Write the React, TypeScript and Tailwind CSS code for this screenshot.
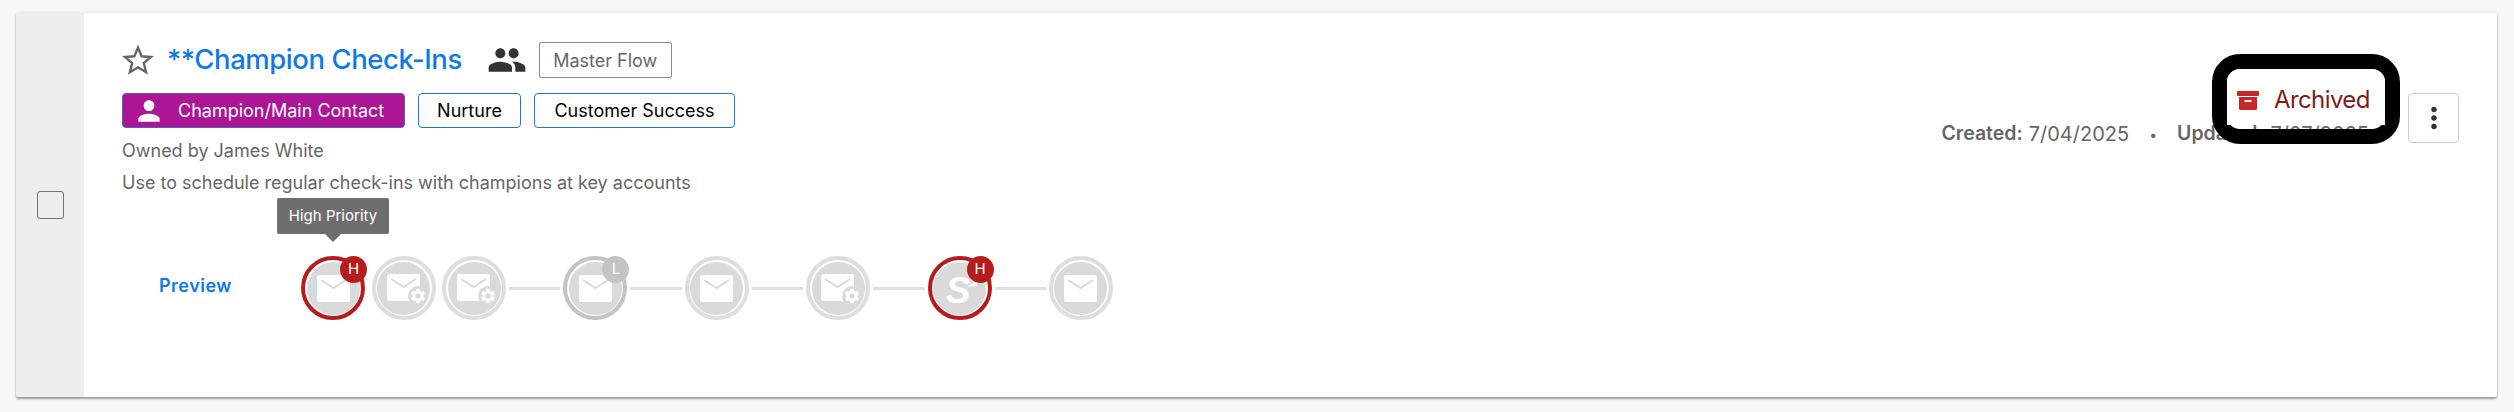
import React from 'react';
import { MdMoreVert, MdPeople, MdPerson, MdSettings } from 'react-icons/md';

type Step = {
  kind: 'mail' | 'task' | 'logo';
  priority?: 'H' | 'L';
  joined?: boolean;
};

const steps: Step[] = [
  { kind: 'mail', priority: 'H' },
  { kind: 'task' },
  { kind: 'task' },
  { kind: 'mail', priority: 'L', joined: true },
  { kind: 'mail', joined: true },
  { kind: 'task', joined: true },
  { kind: 'logo', priority: 'H', joined: true },
  { kind: 'mail', joined: true },
];

const MailGlyph = () => (
  <svg width="33" height="27" viewBox="0 0 33 27" className="block">
    <rect width="33" height="27" rx="2.5" fill="#ffffff" />
    <path d="M4 5l12.5 8L29 5" fill="none" stroke="#dadada" strokeWidth="2" />
  </svg>
);

const StarOutline = () => (
  <svg width="32" height="30" viewBox="0 0 32 30" className="shrink-0">
    <path
      d="M16 2.6l3.6 8.7 9.4.7-7.2 6.1 2.3 9.1L16 22.3l-8.1 4.9 2.3-9.1L3 12l9.4-.7z"
      fill="none"
      stroke="#666666"
      strokeWidth="2.4"
      strokeLinejoin="miter"
    />
  </svg>
);

const ArchiveBox = () => (
  <svg width="22" height="19" viewBox="0 0 22 19" className="shrink-0">
    <rect width="22" height="5" rx="1" fill="#c62828" />
    <path d="M2 6h18v11.5a1.5 1.5 0 0 1-1.500 1.500h-15a1.500 1.500 0 0 1-1.500-1.500z" fill="#c62828" />
    <rect x="7.500" y="9" width="7" height="2" fill="#ffffff" />
  </svg>
);

const StepIcon = ({ kind }: { kind: Step['kind'] }) => {
  if (kind === 'logo') {
    return (
      <div className="relative -ml-[3px] mt-[6px]">
        <span className="block text-[37px] leading-[30px] font-bold italic text-white font-['Liberation_Sans',sans-serif]">S</span>
        <svg width="14" height="10" viewBox="0 0 14 10" className="absolute -right-[11px] top-[1px]">
          <path d="M0 10L14 0 9 9z" fill="#ffffff" />
        </svg>
      </div>
    );
  }
  if (kind === 'task') {
    return (
      <div className="relative -ml-[1px] -mt-[2px]">
        <MailGlyph />
        <div className="absolute -right-[8px] -bottom-[5px] w-[20px] h-[20px] rounded-full bg-[#dadada] flex items-center justify-center">
          <MdSettings className="text-white text-[18px]" />
        </div>
      </div>
    );
  }
  return <MailGlyph />;
};

const StepNode = ({ step }: { step: Step }) => {
  const ring =
    step.priority === 'H' ? 'border-[#b71c1c]' : step.priority === 'L' ? 'border-[#c4c4c4]' : 'border-[#dedede]';
  return (
    <div className={`relative w-[64px] h-[64px] rounded-full border-[4px] ${ring} p-[1.5px] shrink-0`}>
      <div className="w-full h-full rounded-full bg-[#dadada] flex items-center justify-center">
        <StepIcon kind={step.kind} />
      </div>
      {step.priority && (
        <div
          className={`absolute -top-[4px] -right-[6px] w-[27px] h-[27px] rounded-full flex items-center justify-center text-[15px] text-white ${
            step.priority === 'H' ? 'bg-[#b71c1c]' : 'bg-[#c4c4c4]'
          }`}
        >
          {step.priority}
        </div>
      )}
    </div>
  );
};

export default function App() {
  return (
    <div className="h-[412px] bg-[#f7f7f7] pt-[13px] pl-[16px] pr-[17px] font-['Inter',sans-serif]">
      <div className="h-[384px] flex bg-white rounded-[2px] overflow-hidden shadow-[0_2px_2px_rgba(0,0,0,0.35),0_0_3px_rgba(0,0,0,0.12)]">
        <div className="w-[68px] bg-[#eeeeee] flex items-center justify-center">
          <div className="w-[27px] h-[28px] rounded-[3px] border border-[#767676]" />
        </div>

        <div className="flex-1 flex justify-between pl-[38px] pr-[38px] pt-[29px]">
          <div>
            <div className="flex items-center h-[36px]">
              <StarOutline />
              <span className="ml-[13px] text-[27.5px] leading-none font-medium text-[#0f7ae5] tracking-[-0.45px]">**Champion Check-Ins</span>
              <MdPeople className="ml-[25px] text-[40px] text-[#333333]" />
              <div className="ml-[12px] h-[36px] w-[133px] flex items-center justify-center border border-[#8a8a8a] rounded-[2px] text-[18px] text-[#666666]">
                Master Flow
              </div>
            </div>

            <div className="flex mt-[15px] gap-[13px] text-[18px]">
              <div className="h-[35px] w-[283px] flex items-center pl-[12px] rounded-[4px] bg-[#ad1597] border border-[#5f5fb0] text-white">
                <MdPerson className="text-[32px] -ml-[2px]" />
                <span className="ml-[13px]">Champion/Main Contact</span>
              </div>
              <div className="h-[35px] w-[103px] flex items-center justify-center rounded-[4px] border border-[#1976d2] text-black">Nurture</div>
              <div className="h-[35px] w-[201px] flex items-center justify-center rounded-[4px] border border-[#1976d2] text-black">Customer Success</div>
            </div>

            <p className="mt-[12px] text-[18px] leading-[22px] text-[#666666]">Owned by James White</p>
            <p className="mt-[10px] text-[18px] leading-[22px] text-[#666666]">Use to schedule regular check-ins with champions at key accounts</p>

            <div className="flex items-center mt-[62px]">
              <a className="ml-[37px] w-[142px] mb-[5px] text-[18px] font-semibold tracking-[0.5px] text-[#0f7ae5]">Preview</a>
              <div className="relative flex items-center">
                <div className="absolute -top-[58px] left-[-24px] w-[112px] h-[36px] bg-[#6e6e6e] rounded-[2px] flex items-center justify-center text-[15px] text-white">
                  High Priority
                  <div className="absolute left-[48px] top-[36px] border-x-[8px] border-x-transparent border-t-[8px] border-t-[#6e6e6e]" />
                </div>
                {steps.map((step, i) => (
                  <React.Fragment key={i}>
                    {step.joined && <div className="w-[51.4px] h-[3px] mx-[3px] bg-[#e0e0e0]" />}
                    {!step.joined && i > 0 && <div className="w-[6.5px]" />}
                    <StepNode step={step} />
                  </React.Fragment>
                ))}
              </div>
            </div>
          </div>

          <div className="flex items-start pt-[51px]">
            <div className="relative mt-[26px] flex items-center h-[30px] text-[20px] text-[#666666]">
              <span className="font-semibold text-[19.5px]">Created:</span>
              <span className="ml-[6px]">7/04/2025</span>
              <span className="mx-[20px] text-[14px]">•</span>
              <span className="font-semibold text-[19.5px]">Updated:</span>
              <span className="ml-[7px]">7/07/2025</span>
              {/* callout ring is see-through below the badge, date tops show in the gap */}
              <div className="absolute -top-[65px] right-[-31px] w-[188px] h-[90px] rounded-[28px] border-[15px] border-black">
                <div className="h-[56px] rounded-t-[13px] bg-white flex items-center pl-[10px] pt-[6px]">
                  <ArchiveBox />
                  <span className="ml-[15px] text-[24px] tracking-[-0.6px] text-[#7f1d1d]">Archived</span>
                </div>
              </div>
            </div>
            <button className="ml-[39px] w-[51px] h-[50px] rounded-[4px] border border-[#cccccc] flex items-center justify-center">
              <MdMoreVert className="text-[34px] text-[#333333]" />
            </button>
          </div>
        </div>
      </div>
    </div>
  );
}
